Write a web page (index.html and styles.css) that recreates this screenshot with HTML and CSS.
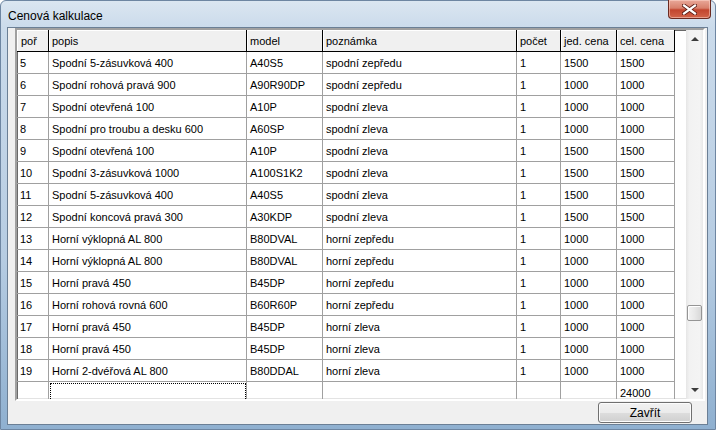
FILE: index.html
```html
<!DOCTYPE html>
<html lang="cs">
<head>
    <meta charset="UTF-8">
    <title>Cenová kalkulace</title>
    <link rel="stylesheet" href="styles.css">
</head>
<body>
    <div class="window">
        <div class="title-bar">
            <span class="title">Cenová kalkulace</span>
            <div class="close-btn">
                <svg width="15" height="11" viewBox="0 0 15 11">
                    <path d="M2 1.5 L13 9.5 M13 1.5 L2 9.5" stroke="#5a1a12" stroke-width="4" stroke-linecap="square"/>
                    <path d="M2 1.5 L13 9.5 M13 1.5 L2 9.5" stroke="#fff" stroke-width="2.2" stroke-linecap="square"/>
                </svg>
            </div>
        </div>
        <div class="client">
            <div class="grid">
                <div class="grid-view">
                    <table class="calc-table">
                        <thead>
                            <tr>
                                <th class="c-por">poř</th>
                                <th class="c-popis">popis</th>
                                <th class="c-model">model</th>
                                <th class="c-pozn">poznámka</th>
                                <th class="c-pocet">počet</th>
                                <th class="c-jed">jed. cena</th>
                                <th class="c-cel">cel. cena</th>
                            </tr>
                        </thead>
                        <tbody>
                            <tr><td>5</td><td>Spodní 5-zásuvková 400</td><td>A40S5</td><td>spodní zepředu</td><td>1</td><td>1500</td><td>1500</td></tr>
                            <tr><td>6</td><td>Spodní rohová pravá 900</td><td>A90R90DP</td><td>spodní zepředu</td><td>1</td><td>1000</td><td>1000</td></tr>
                            <tr><td>7</td><td>Spodní otevřená 100</td><td>A10P</td><td>spodní zleva</td><td>1</td><td>1000</td><td>1000</td></tr>
                            <tr><td>8</td><td>Spodní pro troubu a desku 600</td><td>A60SP</td><td>spodní zleva</td><td>1</td><td>1000</td><td>1000</td></tr>
                            <tr><td>9</td><td>Spodní otevřená 100</td><td>A10P</td><td>spodní zleva</td><td>1</td><td>1500</td><td>1500</td></tr>
                            <tr><td>10</td><td>Spodní 3-zásuvková 1000</td><td>A100S1K2</td><td>spodní zleva</td><td>1</td><td>1500</td><td>1500</td></tr>
                            <tr><td>11</td><td>Spodní 5-zásuvková 400</td><td>A40S5</td><td>spodní zleva</td><td>1</td><td>1500</td><td>1500</td></tr>
                            <tr><td>12</td><td>Spodní koncová pravá 300</td><td>A30KDP</td><td>spodní zleva</td><td>1</td><td>1500</td><td>1500</td></tr>
                            <tr><td>13</td><td>Horní výklopná AL 800</td><td>B80DVAL</td><td>horní zepředu</td><td>1</td><td>1000</td><td>1000</td></tr>
                            <tr><td>14</td><td>Horní výklopná AL 800</td><td>B80DVAL</td><td>horní zepředu</td><td>1</td><td>1000</td><td>1000</td></tr>
                            <tr><td>15</td><td>Horní pravá 450</td><td>B45DP</td><td>horní zepředu</td><td>1</td><td>1000</td><td>1000</td></tr>
                            <tr><td>16</td><td>Horní rohová rovná 600</td><td>B60R60P</td><td>horní zepředu</td><td>1</td><td>1000</td><td>1000</td></tr>
                            <tr><td>17</td><td>Horní pravá 450</td><td>B45DP</td><td>horní zleva</td><td>1</td><td>1000</td><td>1000</td></tr>
                            <tr><td>18</td><td>Horní pravá 450</td><td>B45DP</td><td>horní zleva</td><td>1</td><td>1000</td><td>1000</td></tr>
                            <tr><td>19</td><td>Horní 2-dvéřová AL 800</td><td>B80DDAL</td><td>horní zleva</td><td>1</td><td>1000</td><td>1000</td></tr>
                            <tr class="total-row"><td></td><td class="focus-cell"></td><td></td><td></td><td></td><td></td><td>24000</td></tr>
                        </tbody>
                    </table>
                </div>
                <div class="scrollbar">
                    <div class="arrow arrow-up"></div>
                    <div class="track">
                        <div class="thumb"></div>
                    </div>
                    <div class="arrow arrow-down"></div>
                </div>
            </div>
            <div class="footer">
                <button class="btn">Zavřít</button>
            </div>
        </div>
    </div>
</body>
</html>
```

FILE: styles.css
```css
* {
    margin: 0;
    padding: 0;
    box-sizing: border-box;
}

body {
    background: #fff;
    font-family: 'Liberation Sans', Arial, sans-serif;
    overflow: hidden;
}

.window {
    width: 716px;
    height: 430px;
    padding: 0 7px 4px 6px;
    border: 1px solid #6e86a2;
    border-radius: 6px 6px 0 0;
    background: linear-gradient(to bottom, #dbe6f1 0, #cbdbeb 26px, #b6cce2 60%, #8fb0d0 100%);
    display: flex;
    flex-direction: column;
}

.title-bar {
    height: 26px;
    display: flex;
    align-items: flex-start;
    justify-content: space-between;
}

.title {
    font-size: 12px;
    color: #000;
    margin-top: 8px;
    margin-left: 1px;
}

.close-btn {
    width: 43px;
    height: 19px;
    margin-top: -1px;
    margin-right: -3px;
    border: 1px solid #6b2a21;
    border-top: none;
    border-radius: 0 0 4px 4px;
    background: linear-gradient(to bottom, #e9a899 0, #d8806c 45%, #c2452e 55%, #d2644a 100%);
    box-shadow: inset 0 0 0 1px rgba(255, 220, 210, 0.5);
    display: flex;
    align-items: center;
    justify-content: center;
}

.client {
    flex: 1;
    background: #f0f0f0;
    border: 1px solid #6b7f95;
    display: flex;
    flex-direction: column;
}

.grid {
    width: 690px;
    height: 373px;
    margin-left: 7px;
    border-style: solid;
    border-width: 2px;
    border-color: #a0a0a0 #fff #fff #a0a0a0;
    box-shadow: inset 1px 1px 0 #696969, inset -1px -1px 0 #e3e3e3;
    background: #fff;
    display: flex;
}

.grid-view {
    flex: 1;
    overflow: hidden;
}

.calc-table {
    width: 658px;
    table-layout: fixed;
    border-collapse: separate;
    border-spacing: 0;
    font-size: 11px;
    color: #000;
}

.calc-table th,
.calc-table td {
    height: 22px;
    padding: 0 0 0 3px;
    text-align: left;
    font-weight: normal;
    white-space: nowrap;
    overflow: hidden;
}

.calc-table th {
    background: #f0f0f0;
    border-right: 1px solid #000;
    border-bottom: 1px solid #000;
    box-shadow: inset 1px 1px 0 #fff;
}

.calc-table td {
    border-right: 1px solid #a0a0a0;
    border-bottom: 1px solid #a0a0a0;
}

.calc-table th.c-por { width: 32px; padding-left: 4px; }
.c-popis { width: 198px; }
.c-model { width: 76px; }
.c-pozn { width: 194px; }
.c-pocet { width: 44px; }
.c-jed { width: 56px; }
.c-cel { width: 58px; }

.calc-table td.focus-cell {
    outline: 1px dotted #000;
    outline-offset: -2px;
}

.scrollbar {
    width: 17px;
    display: flex;
    flex-direction: column;
    background: linear-gradient(to right, #e6e6e6 0, #f2f2f2 20%, #f4f4f4 80%, #e8e8e8 100%);
}

.arrow {
    height: 17px;
    position: relative;
}

.arrow::after {
    content: '';
    position: absolute;
    left: 5px;
    border-left: 4px solid transparent;
    border-right: 4px solid transparent;
}

.arrow-up::after {
    top: 7px;
    border-bottom: 4px solid #3c3c3c;
}

.arrow-down::after {
    top: 6px;
    border-top: 4px solid #3c3c3c;
}

.track {
    flex: 1;
    position: relative;
}

.thumb {
    position: absolute;
    left: 1px;
    right: 1px;
    top: 258px;
    height: 16px;
    border: 1px solid #959595;
    border-radius: 2px;
    background: linear-gradient(to right, #f3f3f3, #e8e8e8 50%, #d8d8d8);
    box-shadow: inset 1px 1px 0 #fff;
}

.footer {
    display: flex;
    justify-content: flex-end;
    padding: 1px 15px 0 0;
}

.btn {
    width: 94px;
    height: 21px;
    font-family: 'Liberation Sans', Arial, sans-serif;
    font-size: 12px;
    color: #000;
    border: 1px solid #707070;
    border-radius: 3px;
    background: linear-gradient(to bottom, #f2f2f2 0, #ebebeb 50%, #dddddd 51%, #cfcfcf 100%);
    box-shadow: inset 0 0 0 1px #fcfcfc;
}
```
